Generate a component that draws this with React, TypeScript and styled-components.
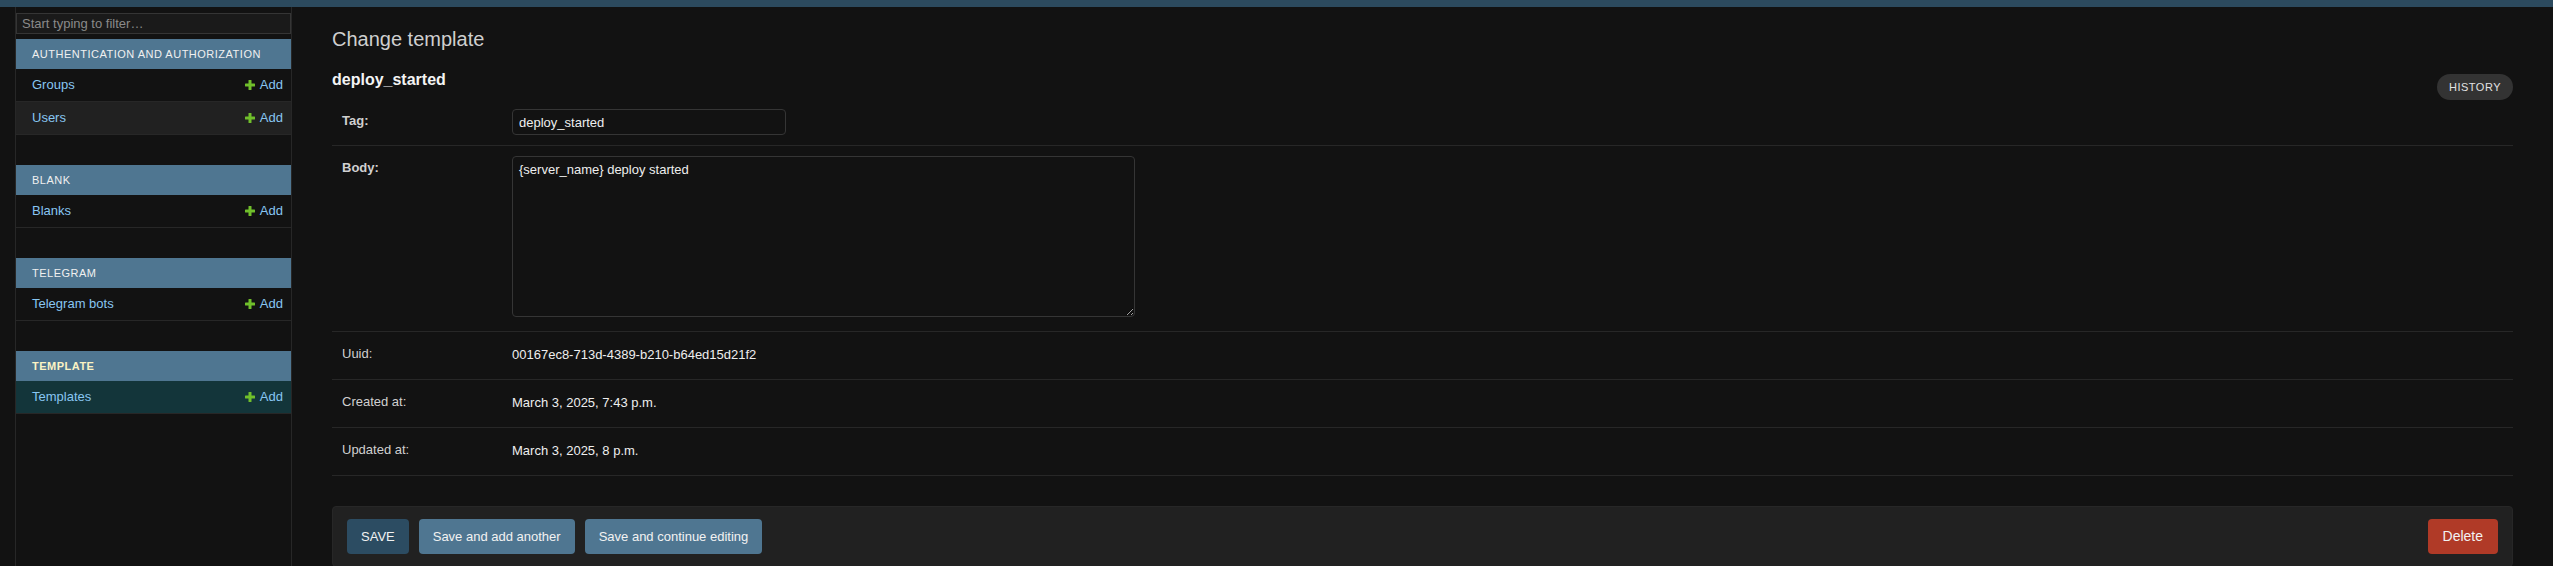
import styled, { createGlobalStyle, css } from "styled-components";

const GlobalStyle = createGlobalStyle`
  html, body {
    margin: 0;
    padding: 0;
    background-color: #121212;
    color: #eeeeee;
    font-family: "Liberation Sans", Arial, sans-serif;
    font-size: 13px;
  }
  * {
    box-sizing: border-box;
  }
`;

const Breadcrumbs = styled.div`
  height: 7px;
  background-color: #2c4a5e;
`;

const Main = styled.div`
  display: flex;
  min-height: 559px;
`;

const SidebarToggle = styled.div`
  flex: 0 0 16px;
  border-right: 1px solid #272727;
`;

const Sidebar = styled.nav`
  flex: 0 0 276px;
  border-right: 1px solid #272727;
`;

const FilterInput = styled.input`
  display: block;
  width: 100%;
  height: 21px;
  margin: 6px 0 5px;
  padding: 2px 5px;
  border: 1px solid #353535;
  background-color: #1a1a1a;
  color: #eeeeee;
  font-family: inherit;
  font-size: 13px;
  line-height: 14px;
  outline: none;
  &::placeholder {
    color: #8a8a8a;
  }
`;

const Module = styled.div`
  margin-bottom: 30px;
`;

const Caption = styled.div<{ $current?: boolean }>`
  padding: 8px 16px;
  background-color: #4f7691;
  color: #f0f0f0;
  font-size: 11px;
  line-height: 14px;
  letter-spacing: 0.5px;
  text-transform: uppercase;
  ${(p) =>
    p.$current &&
    css`
      color: #fbf3c4;
      font-weight: bold;
    `}
`;

const ModelRow = styled.div<{ $alt?: boolean; $current?: boolean }>`
  display: flex;
  justify-content: space-between;
  align-items: center;
  padding: 8px 8px 8px 16px;
  line-height: 16px;
  border-bottom: 1px solid #272727;
  background-color: ${(p) =>
    p.$current ? "#13353a" : p.$alt ? "#212121" : "transparent"};
`;

const ModelLink = styled.a`
  color: #88c6f2;
  text-decoration: none;
`;

const AddLink = styled.a`
  display: inline-flex;
  align-items: center;
  gap: 5px;
  color: #88c6f2;
  text-decoration: none;
`;

const Content = styled.main`
  flex: 1;
  padding: 20px 40px;
`;

const Title = styled.h1`
  margin: 0 0 19px;
  font-size: 20px;
  line-height: 24px;
  font-weight: 300;
  color: #cfcfcf;
`;

const SubHeader = styled.div`
  display: flex;
  justify-content: space-between;
  align-items: flex-start;
  height: 20px;
  margin-bottom: 9px;
`;

const ObjectName = styled.h2`
  margin: 0;
  font-size: 16px;
  line-height: 20px;
  font-weight: bold;
  color: #f4f4f4;
`;

const HistoryButton = styled.a`
  margin-top: 4px;
  padding: 3px 12px;
  border-radius: 15px;
  background-color: #333333;
  color: #e2e2e2;
  font-size: 11px;
  line-height: 20px;
  letter-spacing: 0.5px;
  text-transform: uppercase;
  text-decoration: none;
`;

const Fieldset = styled.div`
  margin-bottom: 30px;
`;

const FormRow = styled.div`
  display: flex;
  padding: 10px;
  border-bottom: 1px solid #272727;
`;

const Label = styled.label<{ $required?: boolean }>`
  flex: 0 0 170px;
  padding-top: 4px;
  line-height: 16px;
  color: #d0d0d0;
  font-weight: ${(p) => (p.$required ? "bold" : "normal")};
`;

const TextInput = styled.input`
  width: 274px;
  height: 26px;
  padding: 5px 6px;
  border: 1px solid #353535;
  border-radius: 4px;
  background-color: #121212;
  color: #eeeeee;
  font-family: inherit;
  font-size: 13px;
  outline: none;
`;

const TextArea = styled.textarea`
  display: block;
  width: 623px;
  height: 161px;
  margin-bottom: 4px;
  padding: 5px 6px;
  border: 1px solid #353535;
  border-radius: 4px;
  background-color: #121212;
  color: #eeeeee;
  font-family: inherit;
  font-size: 13px;
  line-height: 16px;
  outline: none;
`;

const ReadOnly = styled.div`
  padding-top: 5px;
  padding-bottom: 6px;
  line-height: 16px;
  color: #eeeeee;
`;

const SubmitRow = styled.div`
  display: flex;
  align-items: center;
  gap: 10px;
  padding: 12px 14px;
  border: 1px solid #272727;
  border-radius: 4px;
  background-color: #212121;
`;

const Button = styled.button<{ $variant?: "default" | "delete" }>`
  height: 35px;
  padding: 10px 14px;
  border: none;
  border-radius: 4px;
  background-color: ${(p) =>
    p.$variant === "default"
      ? "#2c4c62"
      : p.$variant === "delete"
      ? "#b03a27"
      : "#4f7691"};
  color: #f2f2f2;
  font-family: inherit;
  font-size: ${(p) => (p.$variant === "delete" ? "14px" : "13px")};
  line-height: 15px;
  cursor: pointer;
  ${(p) =>
    p.$variant === "delete" &&
    css`
      margin-left: auto;
      padding: 10px 15px;
    `}
`;

function PlusIcon() {
  return (
    <svg width="10" height="10" viewBox="0 0 10 10">
      <rect x="3.5" y="0" width="3" height="10" rx="0.5" fill="#70bf2b" />
      <rect x="0" y="3.5" width="10" height="3" rx="0.5" fill="#70bf2b" />
    </svg>
  );
}

const apps = [
  {
    name: "Authentication and Authorization",
    models: ["Groups", "Users"],
  },
  { name: "Blank", models: ["Blanks"] },
  { name: "Telegram", models: ["Telegram bots"] },
  { name: "Template", models: ["Templates"], current: true },
];

const readonlyFields = [
  { label: "Uuid:", value: "00167ec8-713d-4389-b210-b64ed15d21f2" },
  { label: "Created at:", value: "March 3, 2025, 7:43 p.m." },
  { label: "Updated at:", value: "March 3, 2025, 8 p.m." },
];

export default function App() {
  return (
    <>
      <GlobalStyle />
      <Breadcrumbs />
      <Main>
        <SidebarToggle />
        <Sidebar>
          <FilterInput placeholder="Start typing to filter…" />
          {apps.map((app) => (
            <Module key={app.name}>
              <Caption $current={app.current}>{app.name}</Caption>
              {app.models.map((model, i) => (
                <ModelRow key={model} $alt={i % 2 === 1} $current={app.current}>
                  <ModelLink>{model}</ModelLink>
                  <AddLink>
                    <PlusIcon />
                    Add
                  </AddLink>
                </ModelRow>
              ))}
            </Module>
          ))}
        </Sidebar>
        <Content>
          <Title>Change template</Title>
          <SubHeader>
            <ObjectName>deploy_started</ObjectName>
            <HistoryButton>History</HistoryButton>
          </SubHeader>
          <Fieldset>
            <FormRow>
              <Label $required>Tag:</Label>
              <TextInput defaultValue="deploy_started" />
            </FormRow>
            <FormRow>
              <Label $required>Body:</Label>
              <TextArea defaultValue="{server_name} deploy started" />
            </FormRow>
            {readonlyFields.map((f) => (
              <FormRow key={f.label}>
                <Label>{f.label}</Label>
                <ReadOnly>{f.value}</ReadOnly>
              </FormRow>
            ))}
          </Fieldset>
          <SubmitRow>
            <Button $variant="default">SAVE</Button>
            <Button>Save and add another</Button>
            <Button>Save and continue editing</Button>
            <Button $variant="delete">Delete</Button>
          </SubmitRow>
        </Content>
      </Main>
    </>
  );
}
